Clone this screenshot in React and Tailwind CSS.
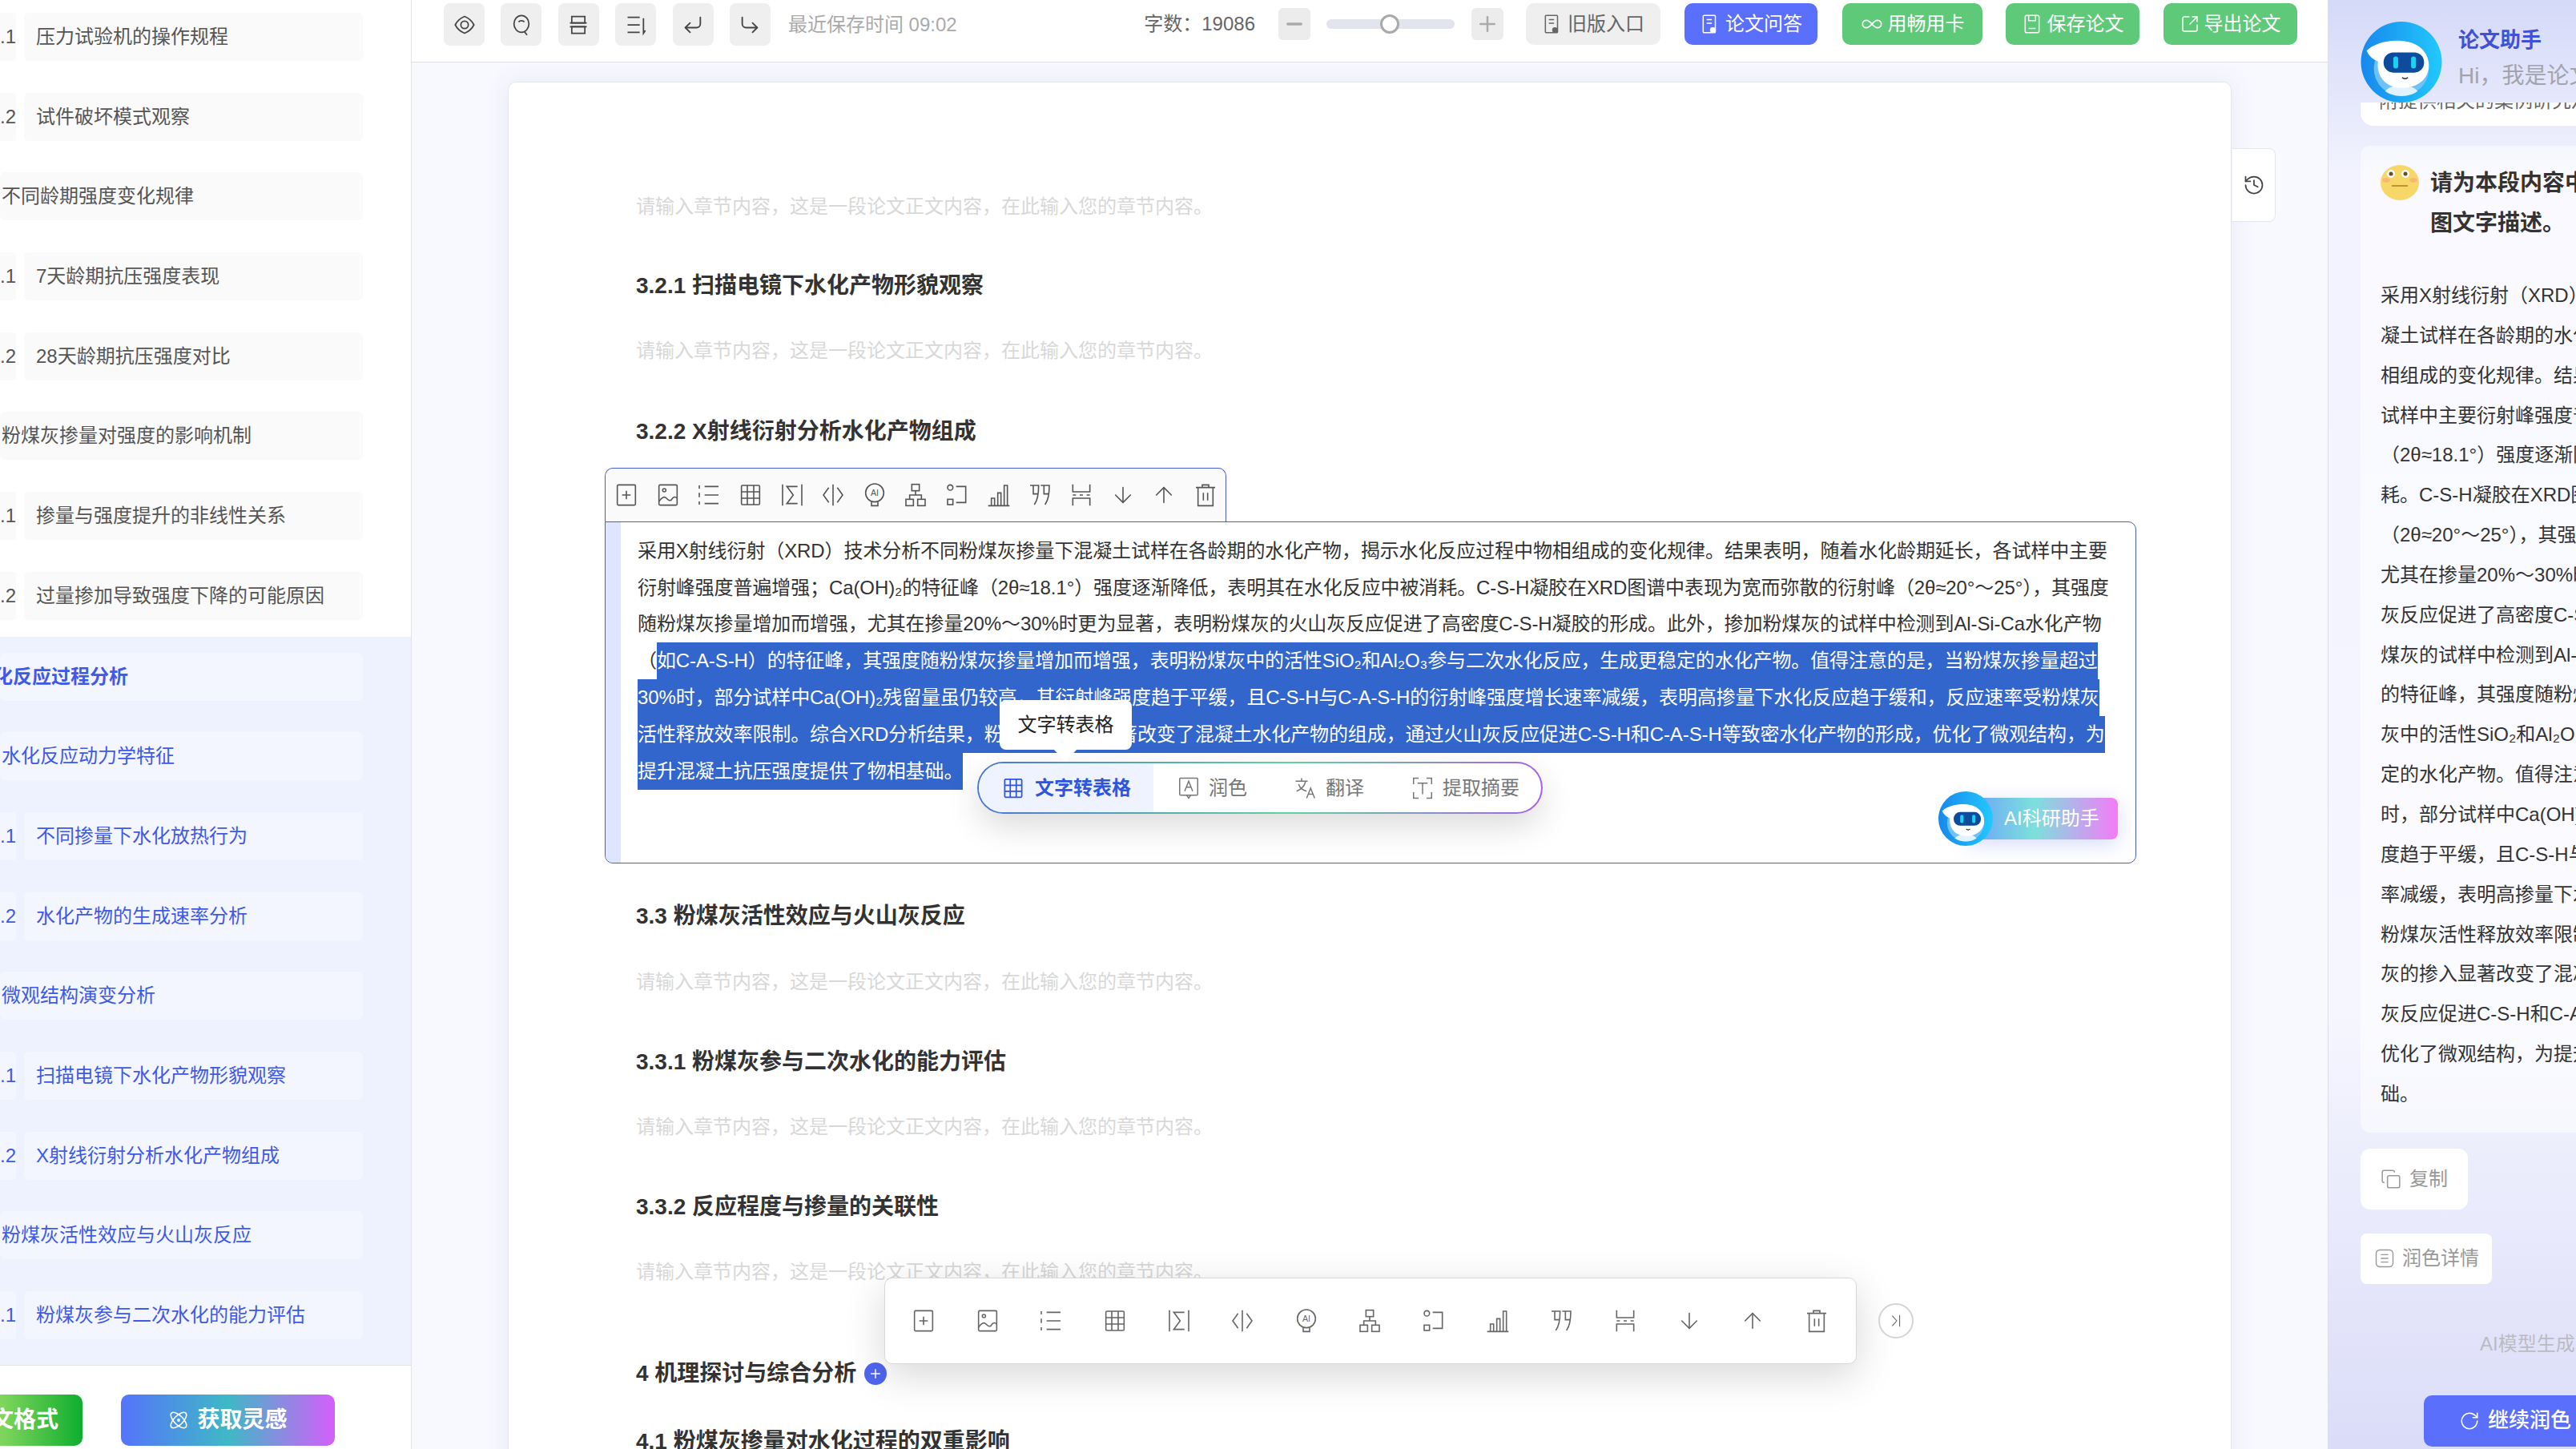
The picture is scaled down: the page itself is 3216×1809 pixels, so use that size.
import React from 'react';
import { Atom, ArrowDown, ArrowUp, Copy, CornerDownLeft, CornerDownRight, Infinity as InfinityIcon, Minus, Plus, RotateCw, History, SquareArrowOutUpRight } from 'lucide-react';

const FONT = "font-['Liberation_Sans','Noto_Sans_CJK_SC',sans-serif]";

const TOOL_ICONS = {
  add: (<><rect x="3.5" y="2.5" width="17" height="19" rx="1" /><path d="M12 8v8M8 12h8" /></>),
  image: (<><rect x="3.5" y="2.5" width="17" height="19" rx="1" /><circle cx="8.5" cy="7.5" r="1.5" /><path d="M3.5 18c3-4 5-5 7-3s4 3 5 1 3-3 5-1" /></>),
  list: (<path d="M8 4h13M8 12h13M8 20h13M3 3v3M3 10v4M3 18v3" />),
  table: (<><rect x="3.5" y="3" width="17" height="18" rx="1" /><path d="M9 3v18M15 3v18M3.5 9h17M3.5 15h17" /></>),
  formula: (<path d="M3 2v20M21 2v20M17 4H7l6 8-6 8h10" />),
  code: (<path d="M8 5l-5 7 5 7M16 5l5 7-5 7M12 2v20" />),
  ai: (<><circle cx="12" cy="10" r="8.5" /><path d="M9 18.5V22h6v-3.5" /><text x="12" y="13" textAnchor="middle" fontSize="8" stroke="none" fill="currentColor" fontFamily="Liberation Sans">AI</text></>),
  tree: (<><rect x="8.5" y="2" width="7" height="6" /><rect x="3" y="16" width="7" height="6" /><rect x="14" y="16" width="7" height="6" /><path d="M12 8v4M6.5 16v-4h11v4" /></>),
  mapping: (<><circle cx="5.5" cy="5" r="2.5" /><rect x="3" y="16" width="5" height="5" /><path d="M11 4h9v15h-9" /></>),
  chart: (<path d="M2 22h20M5 22v-7h3v7M11 22V10h3v12M17 22V3h3v19" />),
  quote: (<path d="M3 3h8c0 8-1 14-4 18M6 3v8h5M13 3h8c0 8-1 14-4 18M16 3v8h5" />),
  split: (<path d="M4 2v7h16V2M4 12h3M10.5 12h3M17 12h3M4 22v-7h16v7" />),
  trash: (<><path d="M3 5h18M9 5V2.5h6V5M5 5v17h14V5M10 10v7M14 10v7" /></>),
  eye: (<><path d="M12 3c5 2 8 5 10 9-2 4-5 7-10 9-5-2-8-5-10-9 2-4 5-7 10-9z" /><circle cx="12" cy="12" r="4" /></>),
  search: (<><ellipse cx="12" cy="11" rx="8" ry="9" /><path d="M15 19l3 4M9 9c1-2 5-2 6 0" /></>),
  layout: (<><path d="M5 3h14v7H5zM5 14h14v7H5z" /><path d="M3 10h18M3 14h18" /></>),
  outline: (<path d="M3 4h13M3 12h13M3 20h13M20 5v16l2-3" />),
  doc: (<><rect x="4" y="2" width="14" height="20" rx="1" /><path d="M8 7h6M8 11h6" /><circle cx="15" cy="19" r="2.5" fill="currentColor" /></>),
  save: (<><rect x="4" y="2" width="16" height="20" rx="2" /><path d="M8 2v6h8V2M8 17h8" /></>),
  textbox: (<><rect x="3" y="2" width="18" height="17" rx="1" /><path d="M8 15l4-10 4 10M9.5 11h5M10 19l2 3 2-3" /></>),
  translate: (<path d="M2 5h12M8 2v3M12 5c-1 5-4 8-9 10M5 8c1 3 4 6 8 7M13 22l4-10 4 10M14.5 18h5" />),
  scan: (<path d="M8 2H3v6M16 2h5v6M8 22H3v-6M16 22h5v-6M7 7h10M12 7v11" />),
  detail: (<><rect x="3" y="3" width="18" height="18" rx="4" /><path d="M8 8h8M8 12h8M8 16h8" /></>),
  collapse: (<path d="M7 5l6 7-6 7M17 4v16" />),
};

function Tool({ name, className = 'size-[28px]', width = 1.2 }) {
  return (
    <svg viewBox="0 0 24 24" fill="none" stroke="currentColor" strokeWidth={width} className={className}>
      {TOOL_ICONS[name]}
    </svg>
  );
}

function Robot({ className }) {
  return (
    <svg viewBox="0 0 100 100" className={className}>
      <defs>
        <linearGradient id="robotBg" x1="0" y1="0" x2="1" y2="0">
          <stop offset="0" stopColor="#1788ec" />
          <stop offset="1" stopColor="#22c9fd" />
        </linearGradient>
      </defs>
      <circle cx="50" cy="50" r="50" fill="url(#robotBg)" />
      <circle cx="50" cy="58" r="34" fill="#6cc3fa" />
      <path d="M30 86c8-10 32-10 40 0-10 8-30 8-40 0z" fill="#e2f2ff" />
      <path d="M7 36c8-8 26-14 44-12 20 1 33 14 33 30 0 17-14 28-33 28-20 0-32-14-30-33-6-2-11-6-14-13z" fill="#fff" />
      <rect x="28" y="38" width="50" height="25" rx="12" fill="#0d4c9c" />
      <rect x="40" y="43" width="6" height="15" rx="3" fill="#19d3f3" />
      <rect x="62" y="43" width="6" height="15" rx="3" fill="#19d3f3" />
      <path d="M51 69c2 2 5 2 7 0" stroke="#123" strokeWidth="1.5" fill="none" />
    </svg>
  );
}

function Face() {
  return (
    <svg viewBox="0 0 48 46" className="w-[48px] h-[46px] shrink-0">
      <ellipse cx="24" cy="23" rx="24" ry="22" fill="#f6d768" />
      <circle cx="13" cy="12" r="5" fill="#fff" />
      <circle cx="31" cy="12" r="5" fill="#fff" />
      <circle cx="13" cy="12" r="2.5" fill="#6b4a1f" />
      <circle cx="31" cy="12" r="2.5" fill="#6b4a1f" />
      <ellipse cx="7" cy="20" rx="5" ry="3" fill="#f4ac7a" opacity="0.7" />
      <ellipse cx="41" cy="20" rx="5" ry="3" fill="#f4ac7a" opacity="0.7" />
      <path d="M14 27h20" stroke="#b5812c" strokeWidth="1.6" />
    </svg>
  );
}

function NavRow({ num, label, active, shift, bold }) {
  const textColor = active ? 'text-[#3f5ae6]' : 'text-[#555555]';
  const rowBg = active ? 'bg-[#f3f6fe]' : 'bg-[#fafafa]';
  return (
    <div className={`flex h-[60px] mb-[39.7px] gap-[10px] text-[24px] whitespace-nowrap shrink-0 ${textColor}`}>
      {num && <div className={`w-[20px] rounded-r flex items-center justify-end ${rowBg}`}>{num}</div>}
      <div className={`rounded-md flex items-center ${num ? 'w-[423px] pl-[15px]' : 'w-[453px]'} ${rowBg} ${bold ? 'font-bold' : ''}`}>
        <span className={shift || (num ? '' : 'ml-[2px]')}>{label}</span>
      </div>
    </div>
  );
}

function Sidebar() {
  return (
    <aside className="w-[514px] shrink-0 bg-white border-r border-[#e2e4ea] flex flex-col overflow-hidden">
      <div className="flex-1 flex flex-col min-h-0">
        <div className="pt-[16px]">
          <NavRow num=".1" label="压力试验机的操作规程" />
          <NavRow num=".2" label="试件破坏模式观察" />
          <NavRow label="不同龄期强度变化规律" />
          <NavRow num=".1" label="7天龄期抗压强度表现" />
          <NavRow num=".2" label="28天龄期抗压强度对比" />
          <NavRow label="粉煤灰掺量对强度的影响机制" />
          <NavRow num=".1" label="掺量与强度提升的非线性关系" />
          <NavRow num=".2" label="过量掺加导致强度下降的可能原因" />
        </div>
        <div className="flex-1 bg-[#edf2fe] -mt-[19px] pt-[20px] overflow-hidden">
          <NavRow active bold shift="-ml-[32px]" label="水化反应过程分析" />
          <NavRow active label="水化反应动力学特征" />
          <NavRow active num=".1" label="不同掺量下水化放热行为" />
          <NavRow active num=".2" label="水化产物的生成速率分析" />
          <NavRow active label="微观结构演变分析" />
          <NavRow active num=".1" label="扫描电镜下水化产物形貌观察" />
          <NavRow active num=".2" label="X射线衍射分析水化产物组成" />
          <NavRow active label="粉煤灰活性效应与火山灰反应" />
          <NavRow active num=".1" label="粉煤灰参与二次水化的能力评估" />
        </div>
      </div>
      <div className="h-[105px] shrink-0 border-t border-[#e2e4ea] pt-[36px] flex gap-[48px]">
        <button className="-ml-[164px] w-[267px] h-[64px] rounded-[10px] flex items-center justify-end pr-[30px] text-[28px] font-bold text-white bg-[linear-gradient(90deg,#c8ee7c_0%,#86d860_60%,#0fae2e_100%)]">
          论文格式
        </button>
        <button className="w-[267px] h-[64px] rounded-[10px] flex items-center justify-center gap-[10px] text-[28px] font-bold text-white bg-[linear-gradient(90deg,#5574fb_0%,#3fb8c6_50%,#d45ffb_100%)]">
          <Atom size={26} strokeWidth={1.5} />
          获取灵感
        </button>
      </div>
    </aside>
  );
}

function TopBtn({ icon, label, className }) {
  return (
    <button className={`h-[52px] rounded-[10px] flex items-center justify-center gap-[6px] text-[24px] ${className}`}>
      {icon}
      {label}
    </button>
  );
}

function TopBar() {
  return (
    <header className="h-[78px] shrink-0 bg-white border-b border-[#dfe1e8] flex items-start pt-[4px] pl-[40px] pr-[38px]">
      <div className="flex gap-[20.4px] text-[#444444]">
        <span className="w-[51px] h-[53px] rounded-lg bg-[#efefef] flex items-center justify-center"><Tool name="eye" width={1.5} /></span>
        <span className="w-[51px] h-[53px] rounded-lg bg-[#efefef] flex items-center justify-center"><Tool name="search" width={1.5} /></span>
        <span className="w-[51px] h-[53px] rounded-lg bg-[#efefef] flex items-center justify-center"><Tool name="layout" width={1.5} /></span>
        <span className="w-[51px] h-[53px] rounded-lg bg-[#efefef] flex items-center justify-center"><Tool name="outline" width={1.5} /></span>
        <span className="w-[51px] h-[53px] rounded-lg bg-[#efefef] flex items-center justify-center"><CornerDownLeft size={28} strokeWidth={1.6} /></span>
        <span className="w-[51px] h-[53px] rounded-lg bg-[#efefef] flex items-center justify-center"><CornerDownRight size={28} strokeWidth={1.6} /></span>
      </div>
      <span className="ml-[22px] leading-[53px] text-[24px] text-[#aaaaaa]">最近保存时间 09:02</span>
      <div className="flex-1" />
      <span className="leading-[52px] text-[24px] text-[#666666] mr-[29px]">字数：19086</span>
      <span className="w-[40px] h-[40px] mt-[6px] rounded-md bg-[#ececec] flex items-center justify-center text-[#aaaaaa] mr-[20px]"><Minus size={28} strokeWidth={3} /></span>
      <div className="relative w-[160px] h-[12px] mt-[20px] rounded-full bg-[#e3e5ee] mr-[21px]">
        <span className="absolute left-[67px] -top-[6px] size-[24px] rounded-full bg-white border-[3px] border-[#aaaaaa]" />
      </div>
      <span className="w-[40px] h-[40px] mt-[6px] rounded-md bg-[#ececec] flex items-center justify-center text-[#aaaaaa] mr-[28px]"><Plus size={30} strokeWidth={2} /></span>
      <TopBtn className="w-[168px] bg-[#efefef] text-[#666666] mr-[30px]" icon={<Tool name="doc" className="size-[26px]" width={1.4} />} label="旧版入口" />
      <TopBtn className="w-[166px] bg-[#5a6ffc] text-white mr-[31px]" icon={<Tool name="doc" className="size-[26px]" width={1.4} />} label="论文问答" />
      <TopBtn className="w-[175px] bg-[#5fc97a] text-white mr-[29px]" icon={<InfinityIcon size={28} strokeWidth={1.5} />} label="用畅用卡" />
      <TopBtn className="w-[167px] bg-[#5fc97a] text-white mr-[30px]" icon={<Tool name="save" className="size-[26px]" width={1.4} />} label="保存论文" />
      <TopBtn className="w-[167px] bg-[#5fc97a] text-white" icon={<SquareArrowOutUpRight size={24} strokeWidth={1.4} />} label="导出论文" />
    </header>
  );
}

const TOOL_NAMES = ['add', 'image', 'list', 'table', 'formula', 'code', 'ai', 'tree', 'mapping', 'chart', 'quote', 'split'];

function ToolIcons({ size }) {
  return (
    <>
      {TOOL_NAMES.map((n) => <Tool key={n} name={n} className={size} />)}
      <ArrowDown className={size} strokeWidth={1.2} />
      <ArrowUp className={size} strokeWidth={1.2} />
      <Tool name="trash" className={size} />
    </>
  );
}

function Heading({ children, className = '' }) {
  return <h3 className={`h-[60px] leading-[60px] text-[28px] font-bold text-[#333333] whitespace-nowrap ${className}`}>{children}</h3>;
}

function Placeholder({ className = '' }) {
  return <p className={`h-[60px] leading-[60px] text-[24px] text-[#d8d8d8] whitespace-nowrap ${className}`}>请输入章节内容，这是一段论文正文内容，在此输入您的章节内容。</p>;
}

function Sel({ children }) {
  return <span className="inline-block h-[46px] leading-[46px] bg-[#3366cc] text-white align-top">{children}</span>;
}

function EditingBlock() {
  return (
    <div className="-ml-[39px] mt-[15px] w-[1912px]">
      <div className="w-[776px] h-[67px] bg-[#fafafa] border border-b-0 border-[#4a5fc1] rounded-t-[10px] flex items-center justify-between pl-[10px] pr-[9px] text-[#555555]">
        <ToolIcons size="size-[32px]" />
      </div>
      <div className="relative h-[427px] border border-[#4a5fc1] rounded-b-[10px] rounded-tr-[10px] flex overflow-visible">
        <div className="w-[19px] bg-[#e0e5ff] rounded-bl-[10px] shrink-0" />
        <div className="pl-[21px] pt-[13px] text-[24px] leading-[45.5px] tracking-[-0.1px] text-[#333333] whitespace-nowrap">
          <div>采用X射线衍射（XRD）技术分析不同粉煤灰掺量下混凝土试样在各龄期的水化产物，揭示水化反应过程中物相组成的变化规律。结果表明，随着水化龄期延长，各试样中主要</div>
          <div>衍射峰强度普遍增强；Ca(OH)₂的特征峰（2θ≈18.1°）强度逐渐降低，表明其在水化反应中被消耗。C-S-H凝胶在XRD图谱中表现为宽而弥散的衍射峰（2θ≈20°～25°），其强度</div>
          <div>随粉煤灰掺量增加而增强，尤其在掺量20%～30%时更为显著，表明粉煤灰的火山灰反应促进了高密度C-S-H凝胶的形成。此外，掺加粉煤灰的试样中检测到Al-Si-Ca水化产物</div>
          <div>（<Sel>如C-A-S-H）的特征峰，其强度随粉煤灰掺量增加而增强，表明粉煤灰中的活性SiO₂和Al₂O₃参与二次水化反应，生成更稳定的水化产物。值得注意的是，当粉煤灰掺量超过</Sel></div>
          <div><Sel>30%时，部分试样中Ca(OH)₂残留量虽仍较高，其衍射峰强度趋于平缓，且C-S-H与C-A-S-H的衍射峰强度增长速率减缓，表明高掺量下水化反应趋于缓和，反应速率受粉煤灰</Sel></div>
          <div><Sel>活性释放效率限制。综合XRD分析结果，粉煤灰的掺入显著改变了混凝土水化产物的组成，通过火山灰反应促进C-S-H和C-A-S-H等致密水化产物的形成，优化了微观结构，为</Sel></div>
          <div><Sel>提升混凝土抗压强度提供了物相基础。</Sel></div>
        </div>

        {/* selection tooltip + action pill */}
        <div className="absolute left-[492px] top-[222px] w-[165px] h-[62px] rounded-lg bg-white flex items-center justify-center text-[24px] text-[#222222] z-10">
          文字转表格
          <span className="absolute left-[72px] -bottom-[10px] size-[20px] rotate-45 bg-white" />
        </div>
        <div className="absolute left-[464px] top-[299px] w-[706px] h-[65px] rounded-full p-[2px] bg-[linear-gradient(90deg,#4a74d8_0%,#5cd69a_55%,#a860ec_100%)] shadow-[0_16px_40px_rgba(0,0,0,0.14)]">
          <div className="h-full rounded-full bg-white overflow-hidden flex items-center text-[24px] text-[#777777]">
            <div className="w-[218px] h-full bg-[#eef3ff] flex items-center justify-center gap-[12px] font-bold text-[#2f55e0] shrink-0">
              <Tool name="table" className="size-[30px]" width={1.4} />
              文字转表格
            </div>
            <span className="ml-[29px] flex items-center gap-[10px]"><Tool name="textbox" className="size-[30px]" />润色</span>
            <span className="ml-[58px] flex items-center gap-[10px]"><Tool name="translate" className="size-[30px]" />翻译</span>
            <span className="ml-[58px] flex items-center gap-[10px]"><Tool name="scan" className="size-[30px]" />提取摘要</span>
          </div>
        </div>

        <div className="absolute right-[22px] top-[336px] w-[224px] h-[68px] flex items-center justify-end">
          <div className="w-[190px] h-[52px] pl-[48px] rounded-lg flex items-center text-[24px] text-white whitespace-nowrap bg-[linear-gradient(90deg,#6b9dfb_0%,#7ce0dc_45%,#f47cf8_100%)] shadow-[0_6px_24px_rgba(90,110,240,0.25)]">
            AI科研助手
          </div>
          <Robot className="absolute left-0 top-0 w-[68px] h-[68px]" />
        </div>
      </div>
    </div>
  );
}

function Editor() {
  return (
    <div className="relative flex-1 min-h-0 bg-[#f8f9ff] pt-[24px] px-[120px] overflow-hidden">
      <div className="h-[2000px] bg-white border border-[#e6e7ee] rounded-[10px] pl-[159px] pt-[125px] shadow-[0_0_30px_rgba(70,80,150,0.10)]">
        <Placeholder />
        <Heading className="mt-[39px]">3.2.1 扫描电镜下水化产物形貌观察</Heading>
        <Placeholder className="mt-[21px]" />
        <Heading className="mt-[41px]">3.2.2 X射线衍射分析水化产物组成</Heading>
        <EditingBlock />
        <Heading className="mt-[36px]">3.3 粉煤灰活性效应与火山灰反应</Heading>
        <Placeholder className="mt-[22px]" />
        <Heading className="mt-[40px]">3.3.1 粉煤灰参与二次水化的能力评估</Heading>
        <Placeholder className="mt-[21px]" />
        <Heading className="mt-[40px]">3.3.2 反应程度与掺量的关联性</Heading>
        <Placeholder className="mt-[21px]" />
        <Heading className="mt-[67px] flex items-center gap-[10px]">
          4 机理探讨与综合分析
          <span className="size-[28px] rounded-full bg-[#4f66f0] flex items-center justify-center text-white"><Plus size={18} strokeWidth={2} /></span>
        </Heading>
        <Heading className="mt-[25px]">4.1 粉煤灰掺量对水化过程的双重影响</Heading>
      </div>

      <div className="absolute left-[2273px] top-[107px] w-[54px] h-[92px] bg-white border border-l-0 border-[#e6e7ee] rounded-r-lg flex items-center justify-center text-[#444444]">
        <History size={28} strokeWidth={1.5} />
      </div>

      {/* floating toolbar */}
      <div className="absolute left-[590px] bottom-[106px] w-[1214px] h-[108px] bg-white border border-[#d8d8d8] rounded-[10px] flex items-center justify-between pl-[32px] pr-[33px] text-[#666666] shadow-[0_14px_50px_rgba(0,0,0,0.16)]">
        <ToolIcons size="size-[32px]" />
      </div>
      <div className="absolute left-[1831px] bottom-[138px] size-[44px] rounded-full bg-white border-2 border-[#d4d4d4] flex items-center justify-center text-[#666666]">
        <Tool name="collapse" className="size-[22px]" />
      </div>
    </div>
  );
}

const ANSWER_LINES = [
  '采用X射线衍射（XRD）技术分析不同粉煤灰掺量下混',
  '凝土试样在各龄期的水化产物，揭示水化反应过程中物',
  '相组成的变化规律。结果表明，随着水化龄期延长，各',
  '试样中主要衍射峰强度普遍增强；Ca(OH)₂的特征峰',
  '（2θ≈18.1°）强度逐渐降低，表明其在水化反应中被消',
  '耗。C-S-H凝胶在XRD图谱中表现为宽而弥散的衍射峰',
  '（2θ≈20°～25°），其强度随粉煤灰掺量增加而增强，',
  '尤其在掺量20%～30%时更为显著，表明粉煤灰的火山',
  '灰反应促进了高密度C-S-H凝胶的形成。此外，掺加粉',
  '煤灰的试样中检测到Al-Si-Ca水化产物（如C-A-S-H）',
  '的特征峰，其强度随粉煤灰掺量增加而增强，表明粉煤',
  '灰中的活性SiO₂和Al₂O₃参与二次水化反应，生成更稳',
  '定的水化产物。值得注意的是，当粉煤灰掺量超过30%',
  '时，部分试样中Ca(OH)₂残留量虽仍较高，但其衍射峰强',
  '度趋于平缓，且C-S-H与C-A-S-H的衍射峰强度增长速',
  '率减缓，表明高掺量下水化反应趋于缓和，反应速率受',
  '粉煤灰活性释放效率限制。综合XRD分析结果，粉煤',
  '灰的掺入显著改变了混凝土水化产物的组成，通过火山',
  '灰反应促进C-S-H和C-A-S-H等致密水化产物的形成，',
  '优化了微观结构，为提升混凝土抗压强度提供了物相基',
  '础。',
];

function AssistantPanel() {
  return (
    <aside className="w-[310px] shrink-0 border-l border-[#dcdde6] overflow-hidden whitespace-nowrap bg-[linear-gradient(180deg,#d4d9f8_0%,#f2f3fe_12%,#f5f6fe_70%,#dbdcf8_100%)]">
      <div className="w-[900px] pl-[40px]">
        <div className="h-[128px] pt-[27px] flex gap-[20px]">
          <Robot className="w-[102px] h-[101px] shrink-0 relative z-10" />
          <div className="pt-[8px]">
            <div className="text-[26px] leading-[30px] font-bold text-[#3f51d9]">论文助手</div>
            <div className="mt-[12px] text-[28px] leading-[36px] text-[#a3a3ad]">Hi，我是论文助手，有什么可以帮您</div>
          </div>
        </div>
        <div className="h-[29px] bg-white rounded-b-2xl overflow-hidden pl-[23px]">
          <div className="-mt-[17px] text-[24px] leading-[30px] text-[#666666]">附提供相关的案例研究及数据</div>
        </div>
        <div className="mt-[25px] bg-white/50 rounded-xl pt-[23px] pl-[25px] pb-[23px] text-[24px] text-[#333333]">
          <div className="flex gap-[14px]">
            <Face />
            <div className="text-[28px] leading-[50px] font-bold -mt-[1px]">请为本段内容中的数据生成<br />图文字描述。</div>
          </div>
          <div className="mt-[40px] leading-[49.85px]">
            {ANSWER_LINES.map((line) => <div key={line}>{line}</div>)}
          </div>
        </div>
        <button className="mt-[20px] w-[134px] h-[76px] rounded-xl bg-white flex items-center justify-center gap-[10px] text-[24px] text-[#999999]">
          <Copy size={26} strokeWidth={1.4} />
          复制
        </button>
        <button className="mt-[30px] w-[164px] h-[63px] rounded-lg bg-white flex items-center justify-center gap-[8px] text-[24px] text-[#999999]">
          <Tool name="detail" className="size-[28px]" />
          润色详情
        </button>
        <div className="mt-[40px] h-px w-[300px] bg-[#e3e4f5]" />
        <div className="mt-[19px] pl-[149px] leading-[30px] text-[24px] text-[#bbbbc4]">AI模型生成，仅供参考</div>
        <button className="mt-[49px] ml-[79px] w-[300px] h-[64px] rounded-[10px] bg-[#5a6ffc] flex items-center gap-[10px] pl-[44px] text-[26px] font-medium text-white">
          <RotateCw size={26} strokeWidth={1.4} />
          继续润色
        </button>
      </div>
    </aside>
  );
}

export default function App() {
  return (
    <div className={`w-[3216px] h-[1809px] flex overflow-hidden bg-white ${FONT}`}>
      <Sidebar />
      <main className="flex-1 min-w-0 flex flex-col">
        <TopBar />
        <Editor />
      </main>
      <AssistantPanel />
    </div>
  );
}
